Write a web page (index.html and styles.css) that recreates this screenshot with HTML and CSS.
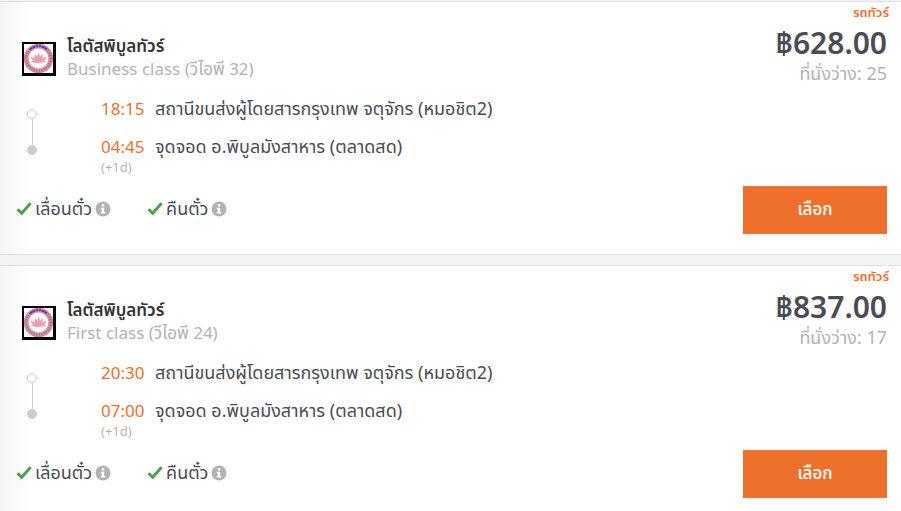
FILE: index.html
```
<!DOCTYPE html>
<html lang="th">
<head>
<meta charset="utf-8">
<meta name="viewport" content="width=device-width, initial-scale=1">
<title>โลตัสพิบูลทัวร์</title>
<link rel="stylesheet" href="styles.css">
</head>
<body>
<svg class="sprite" aria-hidden="true">
  <symbol id="lotus" viewBox="0 0 34 34">
    <rect width="34" height="34" fill="#050505"/>
    <rect x="2" y="2" width="29" height="29" fill="#fff"/>
    <circle cx="16.500" cy="16.500" r="12.200" fill="#fff" stroke="#dc9793" stroke-width="4.600"/>
    <circle cx="16.500" cy="16.500" r="12.200" fill="none" stroke="#a468bd" stroke-width="2.200" stroke-dasharray="1.300 1.200"/>
    <path d="M8 7.500A12.200 12.200 0 0 1 25 7.500" fill="none" stroke="#5c35d0" stroke-width="2" stroke-dasharray="2.500 .7"/>
    <circle cx="16.500" cy="16.500" r="14.300" fill="none" stroke="#b77277" stroke-width=".6"/>
    <path d="M9 15Q12 15 13 17Q12 13 13 12.500Q15 13 15.500 15Q15.500 12 16.500 10.500Q18 12 18 15Q18.500 13 20.500 12.500Q21 14 20.500 17Q21 15 24.500 15Q24 18 21 19Q23 18.500 25 19Q22 21 16.500 21Q11 21 8.500 19Q11 18.500 12 19Q9 18 9 15Z" fill="#eda0b8"/>
    <path d="M13 15L15 19M20 15L18.500 19M16.500 13V20" stroke="#e58caa" stroke-width=".6"/>
  </symbol>
  <symbol id="check" viewBox="0 0 16 16">
    <path d="M1.600 8.300L5.700 12.300L14.600 2.300" fill="none" stroke="#4ba150" stroke-width="3"/>
  </symbol>
  <symbol id="info" viewBox="0 0 16 16">
    <circle cx="8" cy="8" r="7.500" fill="#b3b3b3"/>
    <path d="M6.800 3.200H9.200V5.400H6.800ZM5.800 6.700H9.200V11H10.300V12.600H5.800V11H6.800V8.200H5.800Z" fill="#fff"/>
  </symbol>
</svg>
<main class="trips">
  <article class="trip">
    <div class="details">
      <header class="operator">
        <svg class="logo" aria-hidden="true"><use href="#lotus"/></svg>
        <div>
          <h2 class="name">โลตัสพิบูลทัวร์</h2>
          <p class="class">Business class (วีไอพี 32)</p>
        </div>
      </header>
      <div class="route">
        <div class="line" aria-hidden="true"><i class="dot"></i><i class="stem"></i><i class="dot end"></i></div>
        <div class="stops">
          <div class="stop"><time>18:15</time><span class="place">สถานีขนส่งผู้โดยสารกรุงเทพ จตุจักร (หมอชิต2)</span></div>
          <div class="stop"><time>04:45</time><span class="place">จุดจอด อ.พิบูลมังสาหาร (ตลาดสด)</span></div>
          <small class="day">(+1d)</small>
        </div>
      </div>
      <ul class="features">
        <li><svg class="icon" aria-hidden="true"><use href="#check"/></svg><span class="feature">เลื่อนตั๋ว</span><svg class="icon" aria-hidden="true"><use href="#info"/></svg></li>
        <li><svg class="icon" aria-hidden="true"><use href="#check"/></svg><span class="feature">คืนตั๋ว</span><svg class="icon" aria-hidden="true"><use href="#info"/></svg></li>
      </ul>
    </div>
    <div class="offer">
      <span class="type">รถทัวร์</span>
      <strong class="price">฿628.00</strong>
      <span class="seats">ที่นั่งว่าง: 25</span>
      <button class="select" type="button">เลือก</button>
    </div>
  </article>
  <article class="trip">
    <div class="details">
      <header class="operator">
        <svg class="logo" aria-hidden="true"><use href="#lotus"/></svg>
        <div>
          <h2 class="name">โลตัสพิบูลทัวร์</h2>
          <p class="class">First class (วีไอพี 24)</p>
        </div>
      </header>
      <div class="route">
        <div class="line" aria-hidden="true"><i class="dot"></i><i class="stem"></i><i class="dot end"></i></div>
        <div class="stops">
          <div class="stop"><time>20:30</time><span class="place">สถานีขนส่งผู้โดยสารกรุงเทพ จตุจักร (หมอชิต2)</span></div>
          <div class="stop"><time>07:00</time><span class="place">จุดจอด อ.พิบูลมังสาหาร (ตลาดสด)</span></div>
          <small class="day">(+1d)</small>
        </div>
      </div>
      <ul class="features">
        <li><svg class="icon" aria-hidden="true"><use href="#check"/></svg><span class="feature">เลื่อนตั๋ว</span><svg class="icon" aria-hidden="true"><use href="#info"/></svg></li>
        <li><svg class="icon" aria-hidden="true"><use href="#check"/></svg><span class="feature">คืนตั๋ว</span><svg class="icon" aria-hidden="true"><use href="#info"/></svg></li>
      </ul>
    </div>
    <div class="offer">
      <span class="type">รถทัวร์</span>
      <strong class="price">฿837.00</strong>
      <span class="seats">ที่นั่งว่าง: 17</span>
      <button class="select" type="button">เลือก</button>
    </div>
  </article>
</main>
</body>
</html>
```
FILE: styles.css
```
* {
  box-sizing: border-box;
}

body {
  margin: 0;
  overflow: hidden;
  background: #f4f4f4;
  color: #494c53;
  font: 17px/24px "Noto Sans", "Noto Sans Thai", sans-serif;
}

h2, p, ul {
  margin: 0;
  padding: 0;
}

.sprite {
  display: none;
}

.trips {
  display: grid;
  gap: 10px;
  padding-top: 1px;
}

.trip {
  display: flex;
  justify-content: space-between;
  border: solid #e1e1e5;
  border-width: 1px 0;
  background: linear-gradient(90deg, #f5f5f5, #fff 32px);
}

.details {
  padding: 32px 0 33px 16px;
}

.operator {
  display: flex;
  align-items: flex-start;
  gap: 11px;
  padding-left: 6px;
}

.logo {
  width: 34px;
  height: 34px;
  margin-top: 8px;
}

.name {
  color: #333;
  font-size: 17px;
  font-weight: 600;
  line-height: 24px;
}

.class {
  color: #b3b3b3;
  font-size: 17px;
  line-height: 22px;
}

.route {
  display: flex;
  gap: 64px;
  margin-top: 17px;
  padding-left: 11px;
}

.line {
  display: flex;
  flex-direction: column;
  align-items: center;
  width: 10px;
  padding-top: 12px;
}

.dot {
  width: 10px;
  height: 10px;
  border: 1px solid #ccc;
  border-radius: 50%;
  background: #fff;
}

.end {
  background: #ccc;
}

.stem {
  width: 1px;
  height: 26px;
  background: #ccc;
}

.stop {
  display: flex;
  gap: 10px;
  margin-bottom: 14px;
  white-space: nowrap;
}

.stop time {
  min-width: 44px;
  color: #ed702d;
}

.place {
  font-size: 18px;
  line-height: 22px;
}

.day {
  display: block;
  margin-top: -15px;
  margin-bottom: 1px;
  color: #b3b3b3;
  font-size: 13px;
  line-height: 18px;
}

.features {
  display: flex;
  gap: 36px;
  margin-top: 20px;
  list-style: none;
}

.features li {
  display: flex;
  align-items: center;
  gap: 3px;
  height: 24px;
}

.feature {
  font-size: 18px;
  line-height: 22px;
  padding-bottom: 2px;
}

.icon {
  width: 16px;
  height: 16px;
}

.offer {
  display: flex;
  flex-direction: column;
  align-items: flex-end;
  padding: 0 14px 20px 0;
  white-space: nowrap;
}

.type {
  margin-right: -2px;
  color: #ed702d;
  font-size: 13px;
  font-weight: 600;
  line-height: 20px;
}

.price {
  font-size: 30px;
  font-weight: 600;
  line-height: 42px;
}

.seats {
  color: #b3b3b3;
  font-size: 18px;
  line-height: 18px;
}

.select {
  width: 144px;
  height: 48px;
  margin-top: auto;
  padding: 0 0 2px;
  border: 0;
  background: #ed702d;
  color: #fff;
  font: inherit;
  font-weight: 500;
}
```
